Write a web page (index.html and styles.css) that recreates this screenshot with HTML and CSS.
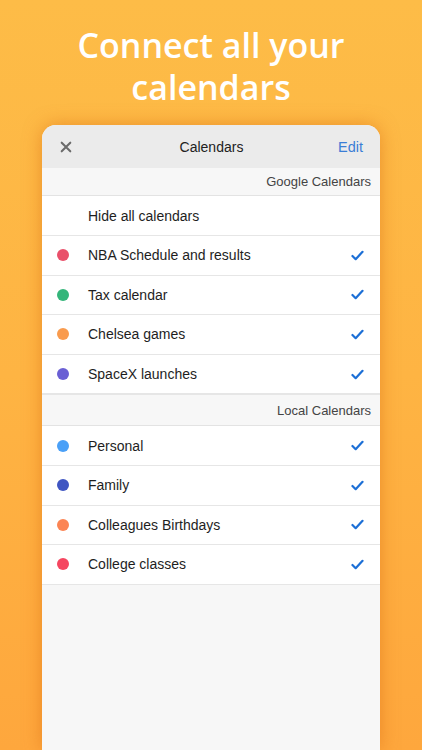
FILE: index.html
```html
<!DOCTYPE html>
<html>
<head>
<meta charset="utf-8">
<link rel="stylesheet" href="styles.css">
</head>
<body>
<div class="page">
  <h1 class="title">Connect all your<br>calendars</h1>
  <div class="card">
    <div class="nav">
      <svg class="close" width="14" height="14" viewBox="0 0 14 14"><path d="M2 2L12 12M12 2L2 12" stroke="#6b6b6b" stroke-width="2.4" stroke-linecap="round"/></svg>
      <div class="nav-title">Calendars</div>
      <div class="edit">Edit</div>
    </div>
    <div class="section">Google Calendars</div>
    <div class="row first"><span class="dot none"></span><span class="label">Hide all calendars</span></div>
    <div class="row"><span class="dot" style="background:#e9506a"></span><span class="label">NBA Schedule and results</span><svg class="check" viewBox="0 0 14 12"><path d="M1.5 6.5L5 10L12.5 2" fill="none" stroke="#1c6fd6" stroke-width="2.4" stroke-linecap="round" stroke-linejoin="round"/></svg></div>
    <div class="row"><span class="dot" style="background:#34b57a"></span><span class="label">Tax calendar</span><svg class="check" viewBox="0 0 14 12"><path d="M1.5 6.5L5 10L12.5 2" fill="none" stroke="#1c6fd6" stroke-width="2.4" stroke-linecap="round" stroke-linejoin="round"/></svg></div>
    <div class="row"><span class="dot" style="background:#f99b4e"></span><span class="label">Chelsea games</span><svg class="check" viewBox="0 0 14 12"><path d="M1.5 6.5L5 10L12.5 2" fill="none" stroke="#1c6fd6" stroke-width="2.4" stroke-linecap="round" stroke-linejoin="round"/></svg></div>
    <div class="row"><span class="dot" style="background:#6a5fd4"></span><span class="label">SpaceX launches</span><svg class="check" viewBox="0 0 14 12"><path d="M1.5 6.5L5 10L12.5 2" fill="none" stroke="#1c6fd6" stroke-width="2.4" stroke-linecap="round" stroke-linejoin="round"/></svg></div>
    <div class="section local">Local Calendars</div>
    <div class="row"><span class="dot" style="background:#4aa0f7"></span><span class="label">Personal</span><svg class="check" viewBox="0 0 14 12"><path d="M1.5 6.5L5 10L12.5 2" fill="none" stroke="#1c6fd6" stroke-width="2.4" stroke-linecap="round" stroke-linejoin="round"/></svg></div>
    <div class="row"><span class="dot" style="background:#3f55c2"></span><span class="label">Family</span><svg class="check" viewBox="0 0 14 12"><path d="M1.5 6.5L5 10L12.5 2" fill="none" stroke="#1c6fd6" stroke-width="2.4" stroke-linecap="round" stroke-linejoin="round"/></svg></div>
    <div class="row"><span class="dot" style="background:#fb8453"></span><span class="label">Colleagues Birthdays</span><svg class="check" viewBox="0 0 14 12"><path d="M1.5 6.5L5 10L12.5 2" fill="none" stroke="#1c6fd6" stroke-width="2.4" stroke-linecap="round" stroke-linejoin="round"/></svg></div>
    <div class="row"><span class="dot" style="background:#f54660"></span><span class="label">College classes</span><svg class="check" viewBox="0 0 14 12"><path d="M1.5 6.5L5 10L12.5 2" fill="none" stroke="#1c6fd6" stroke-width="2.4" stroke-linecap="round" stroke-linejoin="round"/></svg></div>
    <div class="rest"></div>
  </div>
</div>
</body>
</html>
```
FILE: styles.css
```css
* { box-sizing: border-box; }
html, body { margin: 0; padding: 0; }
body {
  width: 422px;
  height: 750px;
  overflow: hidden;
  background: linear-gradient(180deg, #fdbc47 0%, #feb443 50%, #fea73d 100%);
}
.page {
  display: flex;
  flex-direction: column;
  align-items: center;
  height: 750px;
}
.title {
  margin: 24px 0 0 0;
  font-family: "Open Sans", sans-serif;
  font-weight: 600;
  font-size: 34px;
  line-height: 42px;
  color: #fff;
  text-align: center;
  letter-spacing: 0;
}
.card {
  margin-top: 17px;
  width: 338px;
  flex: 1;
  background: #f7f7f7;
  border-radius: 14px 14px 0 0;
  overflow: hidden;
  box-shadow: 0 0 18px rgba(220, 110, 20, 0.55);
  font-family: "Liberation Sans", Arial, sans-serif;
  color: #222;
}
.nav {
  height: 43px;
  background: #ebebeb;
  display: grid;
  grid-template-columns: 1fr auto 1fr;
  align-items: center;
  padding: 0 17px 0 18px;
}
.close { width: 12px; height: 12px; }
.nav-title {
  text-align: center;
  font-size: 14px;
  color: #222;
}
.edit {
  justify-self: end;
  font-size: 14.5px;
  color: #3b7ed6;
}
.section {
  height: 28px;
  background: #f7f7f7;
  border-bottom: 1px solid #e3e3e3;
  display: flex;
  align-items: center;
  justify-content: flex-end;
  padding-right: 9px;
  font-size: 13px;
  color: #444;
}
.section.local { height: 32px; border-top: 1px solid #e6e6e6; }
.row {
  height: 39.6px;
  background: #fff;
  border-bottom: 1px solid #e6e6e6;
  display: flex;
  align-items: center;
  padding: 0 16px 0 15px;
}
.row.first { height: 40px; }
.dot {
  width: 12px;
  height: 12px;
  border-radius: 50%;
  flex: none;
}
.dot.none { background: transparent; }
.label {
  flex: 1;
  margin-left: 19px;
  font-size: 14px;
  color: #1e1e1e;
}
.check { width: 13px; height: 11px; }
.rest { flex: 1; }
```
